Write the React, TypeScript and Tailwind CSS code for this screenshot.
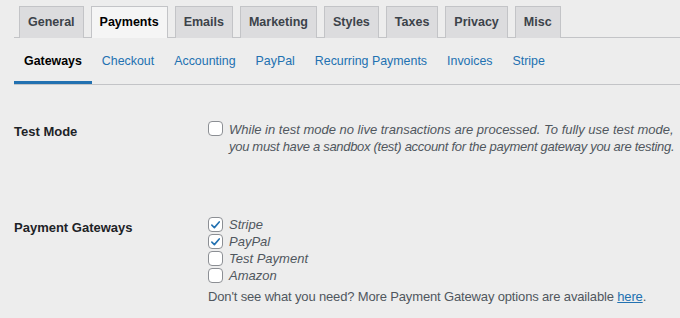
const mainTabs = ["General", "Payments", "Emails", "Marketing", "Styles", "Taxes", "Privacy", "Misc"];
const subTabs = ["Gateways", "Checkout", "Accounting", "PayPal", "Recurring Payments", "Invoices", "Stripe"];
const gateways = [
  { label: "Stripe", checked: true },
  { label: "PayPal", checked: true },
  { label: "Test Payment", checked: false },
  { label: "Amazon", checked: false },
];

function Checkbox({ checked }: { checked?: boolean }) {
  return (
    <span className="flex h-[15px] w-[15px] shrink-0 items-center justify-center rounded-[4px] border border-[#8c8f94] bg-white">
      {checked ? (
        <svg viewBox="0 0 16 16" className="h-3.5 w-3.5">
          <path d="M3.5 8.2 L6.6 11.2 L12.6 4.2" fill="none" stroke="#2271b1" strokeWidth="2" strokeLinecap="round" strokeLinejoin="round" />
        </svg>
      ) : null}
    </span>
  );
}

export default function App() {
  return (
    <div className="h-[318px] w-[680px] overflow-hidden bg-[#ededed] text-[13px] leading-[17px] text-[#1d2327]" style={{ fontFamily: "'Liberation Sans', Arial, sans-serif" }}>
      <div className="ml-[14px] flex border-b border-[#c3c4c7] pl-[5px] pt-[6px]">
        {mainTabs.map((tab) => {
          const active = tab === "Payments";
          return (
            <div
              key={tab}
              className={`-mb-px mr-[7px] flex h-[32px] items-center border border-b-0 px-[8px] text-[12.5px] font-bold ${
                active ? "border-[#c3c4c7] bg-[#f5f5f5] text-black" : "border-[#c3c4c7] bg-[#dcdcde] text-[#3c434a]"
              }`}
            >
              {tab}
            </div>
          );
        })}
      </div>

      <div className="ml-[14px] flex border-b border-[#c3c4c7]">
        {subTabs.map((tab) => {
          const active = tab === "Gateways";
          return (
            <div
              key={tab}
              className={`flex h-[46px] items-center border-b-[3px] px-[10px] pt-[3px] text-[12.4px] ${
                active ? "border-[#2271b1] font-bold text-black" : "border-transparent text-[#2271b1]"
              }`}
            >
              {tab}
            </div>
          );
        })}
      </div>

      <div className="ml-[14px] pt-[36px]">
        <div className="flex">
          <div className="w-[194px] shrink-0 pt-[2px] font-bold">Test Mode</div>
          <div className="flex gap-[6px]">
            <Checkbox />
            <p className="whitespace-nowrap italic text-[#50575e]">
              While in test mode no live transactions are processed. To fully use test mode,
              <br />
              <span className="tracking-[-0.3px]">you must have a sandbox (test) account for the payment gateway you are testing.</span>
            </p>
          </div>
        </div>

        <div className="mt-[61px] flex">
          <div className="w-[194px] shrink-0 pt-[3px] font-bold">Payment Gateways</div>
          <div className="flex flex-col">
            {gateways.map((g) => (
              <label key={g.label} className="flex h-[17px] items-center gap-[6px]">
                <Checkbox checked={g.checked} />
                <span className="italic text-[#50575e]">{g.label}</span>
              </label>
            ))}
            <p className="mt-[4px] whitespace-nowrap tracking-[-0.15px] text-[#50575e]">
              Don't see what you need? More Payment Gateway options are available{" "}
              <a className="text-[#2271b1] underline">here</a>.
            </p>
          </div>
        </div>
      </div>
    </div>
  );
}
